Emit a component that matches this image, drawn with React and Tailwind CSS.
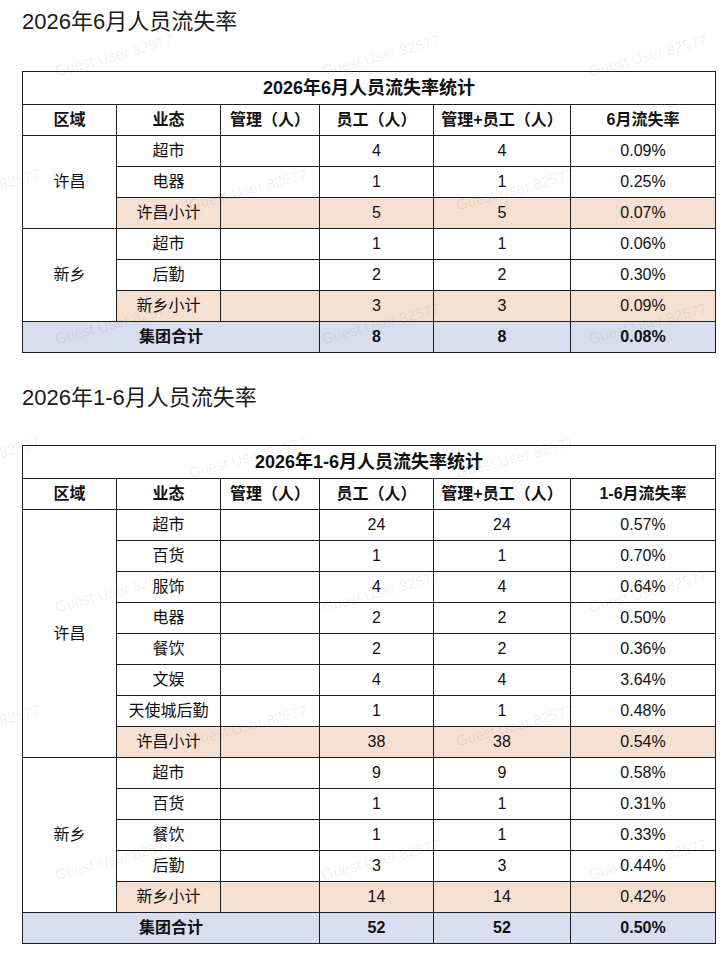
const month = {
  heading: "2026年6月人员流失率",
  title: "2026年6月人员流失率统计",
  rateLabel: "6月流失率",
  groups: [
    {
      region: "许昌",
      rows: [
        ["超市", "4", "4", "0.09%"],
        ["电器", "1", "1", "0.25%"],
      ],
      subtotal: ["许昌小计", "5", "5", "0.07%"],
    },
    {
      region: "新乡",
      rows: [
        ["超市", "1", "1", "0.06%"],
        ["后勤", "2", "2", "0.30%"],
      ],
      subtotal: ["新乡小计", "3", "3", "0.09%"],
    },
  ],
  total: ["8", "8", "0.08%"],
};

const halfYear = {
  heading: "2026年1-6月人员流失率",
  title: "2026年1-6月人员流失率统计",
  rateLabel: "1-6月流失率",
  groups: [
    {
      region: "许昌",
      rows: [
        ["超市", "24", "24", "0.57%"],
        ["百货", "1", "1", "0.70%"],
        ["服饰", "4", "4", "0.64%"],
        ["电器", "2", "2", "0.50%"],
        ["餐饮", "2", "2", "0.36%"],
        ["文娱", "4", "4", "3.64%"],
        ["天使城后勤", "1", "1", "0.48%"],
      ],
      subtotal: ["许昌小计", "38", "38", "0.54%"],
    },
    {
      region: "新乡",
      rows: [
        ["超市", "9", "9", "0.58%"],
        ["百货", "1", "1", "0.31%"],
        ["餐饮", "1", "1", "0.33%"],
        ["后勤", "3", "3", "0.44%"],
      ],
      subtotal: ["新乡小计", "14", "14", "0.42%"],
    },
  ],
  total: ["52", "52", "0.50%"],
};

const cell = "border border-[#1f1f1f] text-center align-middle p-0 leading-[20px]";

const StatTable = ({ data }) => {
  return (
    <table className="w-[693px] table-fixed border-collapse border border-[#1f1f1f] text-[16px] text-[#111]">
      <colgroup>
        <col className="w-[94px]" />
        <col className="w-[104px]" />
        <col className="w-[99px]" />
        <col className="w-[114px]" />
        <col className="w-[137px]" />
        <col className="w-[145px]" />
      </colgroup>
      <tbody>
        <tr className="h-[33px]">
          <td colSpan={6} className={`${cell} text-[18px] font-bold`}>
            {data.title}
          </td>
        </tr>
        <tr className="h-[31px] font-bold">
          <td className={cell}>区域</td>
          <td className={cell}>业态</td>
          <td className={cell}>管理（人）</td>
          <td className={cell}>员工（人）</td>
          <td className={cell}>管理+员工（人）</td>
          <td className={cell}>{data.rateLabel}</td>
        </tr>
        {data.groups.map((g) => (
          <>
            {g.rows.map((r, i) => (
              <tr key={g.region + r[0]} className="h-[31px]">
                {i === 0 && (
                  <td rowSpan={g.rows.length + 1} className={`${cell} bg-white`}>
                    {g.region}
                  </td>
                )}
                <td className={cell}>{r[0]}</td>
                <td className={cell}></td>
                <td className={cell}>{r[1]}</td>
                <td className={cell}>{r[2]}</td>
                <td className={cell}>{r[3]}</td>
              </tr>
            ))}
            <tr key={g.region + "sub"} className="h-[31px] bg-[#f5e0d2]">
              <td className={cell}>{g.subtotal[0]}</td>
              <td className={cell}></td>
              <td className={cell}>{g.subtotal[1]}</td>
              <td className={cell}>{g.subtotal[2]}</td>
              <td className={cell}>{g.subtotal[3]}</td>
            </tr>
          </>
        ))}
        <tr className="h-[31px] bg-[#d8deef] font-bold">
          <td colSpan={3} className={cell}>
            集团合计
          </td>
          <td className={cell}>{data.total[0]}</td>
          <td className={cell}>{data.total[1]}</td>
          <td className={cell}>{data.total[2]}</td>
        </tr>
      </tbody>
    </table>
  );
};

// watermark lattice, same as the source sheet
const marks = [];
for (let j = 0; j < 4; j++) {
  for (let i = 0; i < 3; i++) {
    marks.push({ x: 114 + i * 267, y: 56 + j * 268 });
    marks.push({ x: -19 + i * 267, y: 190 + j * 268 });
  }
}

const App = () => {
  return (
    <div className="relative w-[728px] h-[955px] overflow-hidden bg-white font-['Liberation_Sans','Noto_Sans_CJK_SC',sans-serif]">
      <div className="px-[22px] pt-[8px]">
        <h2 className="text-[22px] leading-[28px] text-[#1a1a1a]">{month.heading}</h2>
        <div className="mt-[35px]">
          <StatTable data={month} />
        </div>
        <h2 className="mt-[31px] text-[22px] leading-[28px] text-[#1a1a1a]">
          {halfYear.heading}
        </h2>
        <div className="mt-[33px]">
          <StatTable data={halfYear} />
        </div>
      </div>
      <div className="pointer-events-none absolute inset-0">
        {marks.map((m, k) => (
          <span
            key={k}
            className="absolute -translate-x-1/2 -translate-y-1/2 -rotate-[15deg] whitespace-nowrap text-[15px] text-black/[0.07]"
            style={{ left: m.x, top: m.y }}
          >
            Guest User 82577
          </span>
        ))}
      </div>
    </div>
  );
};

export default App;
